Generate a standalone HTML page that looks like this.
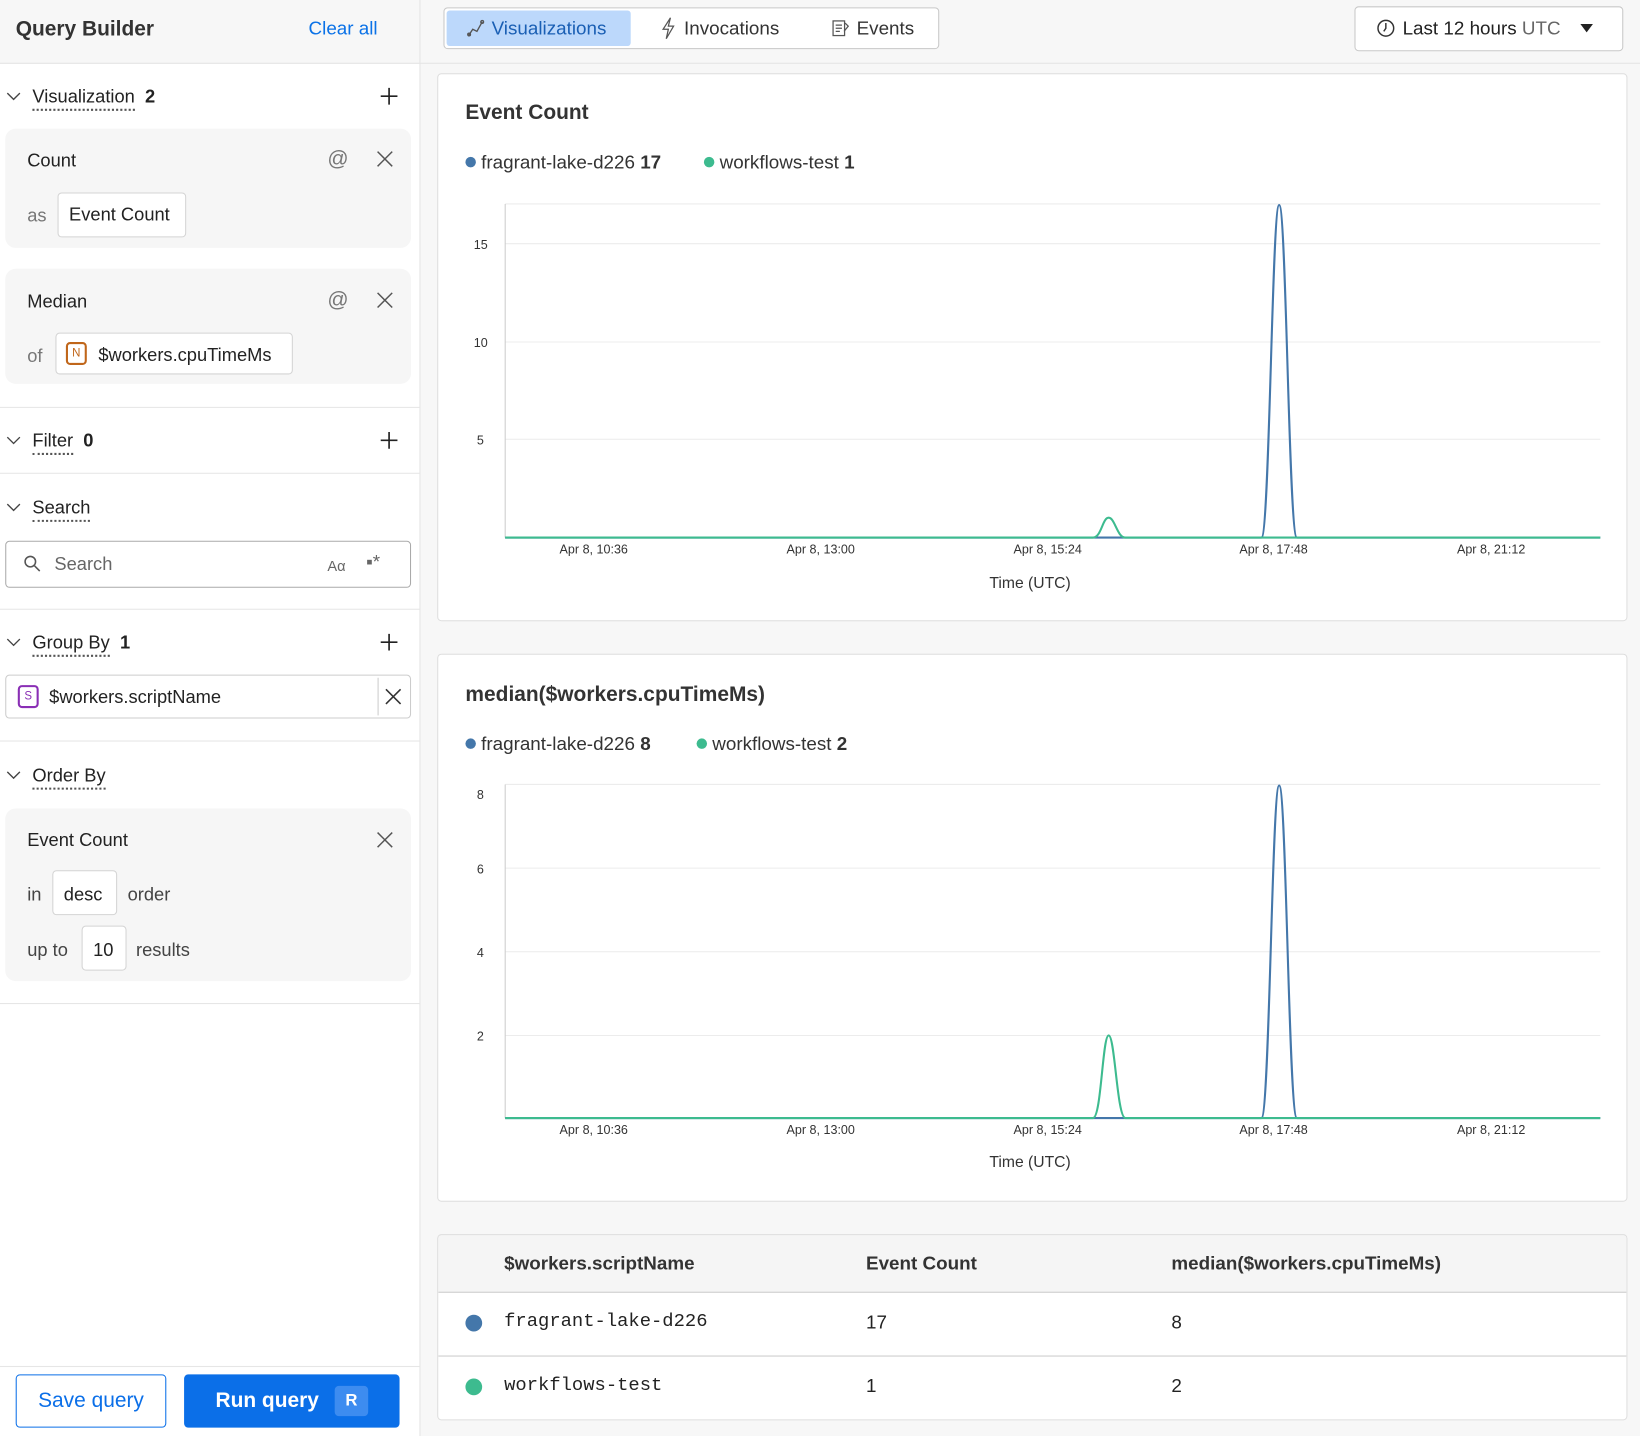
<!DOCTYPE html>
<html><head><meta charset="utf-8"><style>
*{box-sizing:border-box;margin:0;padding:0}
html,body{width:1640px;height:1436px;overflow:hidden;background:#f7f7f7}
#w{position:absolute;left:0;top:0;width:1568px;height:1373px;transform:scale(1.04592);transform-origin:0 0;font-family:"Liberation Sans",sans-serif;color:#222;font-size:17.5px;background:#f7f7f7}
.a{position:absolute}
.side{left:0;top:0;width:402px;height:1373px;background:#fff;border-right:1px solid #e4e4e4}
.hdr{left:0;top:0;width:1568px;height:61px;background:#f7f7f7;border-bottom:1px solid #e4e4e4}
.hl{border-top:1px solid #e6e6e6;left:0;width:402px}
.dot{border-bottom:2px dotted #555;padding-bottom:2px}
.box{background:#f6f6f6;border-radius:10px;left:5px;width:388px}
.inp{background:#fff;border:1px solid #d4d4d4;border-radius:4px}
.g{color:#777}
.card{background:#fff;border:1px solid #dedede;border-radius:4px;left:418px;width:1138px}
.ttl{font-size:20px;font-weight:bold;color:#333}
.lg{font-size:18px;color:#333}
.lg i{display:inline-block;width:10px;height:10px;border-radius:5px;margin-right:5px;vertical-align:1px}
svg text{font-family:"Liberation Sans",sans-serif}
</style></head><body><div id="w">
<div class="a hdr"></div>
<div class="a side"></div>
<div class="a" style="left:0;top:0;width:402px;height:61px;background:#f7f7f7;border-bottom:1px solid #e4e4e4;border-right:1px solid #e4e4e4"></div>
<div class="a" style="left:15px;top:17px;font-size:20px;font-weight:bold;color:#333">Query Builder</div>
<div class="a" style="left:295px;top:17px;font-size:18px;color:#0b72e7">Clear all</div>

<div class="a" style="left:424px;top:7px;width:474px;height:40px;border:1px solid #c8c8c8;border-radius:4px;background:#fff"></div>
<div class="a" style="left:427px;top:10px;width:176px;height:34px;background:#bcd8fb;border-radius:3px"></div>
<svg class="a" style="left:446px;top:18px" width="18" height="18" viewBox="0 0 18 18" fill="none" stroke="#555" stroke-width="1.3"><path d="M2 16 L6 10 L10 12 L15 3"/><circle cx="2.5" cy="15" r="1.3"/><circle cx="15" cy="3" r="1.3"/></svg>
<div class="a" style="left:470px;top:17px;font-size:18px;color:#1a5fb4">Visualizations</div>
<svg class="a" style="left:631px;top:16px" width="16" height="22" viewBox="0 0 16 22" fill="none" stroke="#555" stroke-width="1.2"><path d="M10 1 L3 12 H8 L6 21 L13 9 H8 Z"/></svg>
<div class="a" style="left:654px;top:17px;font-size:18px;color:#333">Invocations</div>
<svg class="a" style="left:795px;top:18px" width="18" height="18" viewBox="0 0 18 18" fill="none" stroke="#555" stroke-width="1.2"><rect x="1.5" y="2" width="11" height="14"/><path d="M4 6h6M4 9h6M4 12h4M13 4l3 3-4 5"/></svg>
<div class="a" style="left:819px;top:17px;font-size:18px;color:#333">Events</div>

<div class="a" style="left:1295px;top:6px;width:257px;height:43px;border:1px solid #c8c8c8;border-radius:4px;background:#fff"></div>
<svg class="a" style="left:1316px;top:18px" width="18" height="18" viewBox="0 0 18 18" fill="none" stroke="#333" stroke-width="1.4"><circle cx="9" cy="9" r="7.5"/><path d="M9 4v5l-2 3"/></svg>
<div class="a" style="left:1341px;top:17px;font-size:18px;color:#222">Last 12 hours <span style="color:#666">UTC</span></div>
<svg class="a" style="left:1510px;top:22px" width="14" height="10"><path d="M1 1h12L7 9z" fill="#222"/></svg>

<!-- sidebar -->
<svg class="a" style="left:6px;top:87px" width="14" height="10"><path d="M1 2l6 6 6-6" fill="none" stroke="#444" stroke-width="1.3"/></svg>
<div class="a" style="left:31px;top:82px"><span class="dot">Visualization</span>&nbsp; <b>2</b></div>
<svg class="a" style="left:363px;top:83px" width="18" height="18" stroke="#222" stroke-width="1.6"><path d="M9 1v16M1 9h16"/></svg>
<div class="a box" style="top:123px;height:114px"></div>
<div class="a" style="left:26px;top:143px">Count</div>
<div class="a" style="left:313px;top:141px;font-size:20px;color:#777">@</div>
<svg class="a" style="left:360px;top:144px" width="16" height="16" stroke="#555" stroke-width="1.4"><path d="M1 1l14 14M15 1L1 15"/></svg>
<div class="a g" style="left:26px;top:196px">as</div>
<div class="a inp" style="left:55px;top:184px;width:123px;height:43px"></div>
<div class="a" style="left:66px;top:195px">Event Count</div>
<div class="a box" style="top:257px;height:110px"></div>
<div class="a" style="left:26px;top:278px">Median</div>
<div class="a" style="left:313px;top:276px;font-size:20px;color:#777">@</div>
<svg class="a" style="left:360px;top:279px" width="16" height="16" stroke="#555" stroke-width="1.4"><path d="M1 1l14 14M15 1L1 15"/></svg>
<div class="a g" style="left:26px;top:330px">of</div>
<div class="a inp" style="left:53px;top:318px;width:227px;height:40px"></div>
<div class="a" style="left:63px;top:327px;width:20px;height:22px;border:2px solid #c0661a;border-radius:4px;font-size:11px;color:#c0661a;text-align:center;line-height:18px">N</div>
<div class="a" style="left:94px;top:329px">$workers.cpuTimeMs</div>

<div class="a hl" style="top:389px"></div>
<svg class="a" style="left:6px;top:416px" width="14" height="10"><path d="M1 2l6 6 6-6" fill="none" stroke="#444" stroke-width="1.3"/></svg>
<div class="a" style="left:31px;top:411px"><span class="dot">Filter</span>&nbsp; <b>0</b></div>
<svg class="a" style="left:363px;top:412px" width="18" height="18" stroke="#222" stroke-width="1.6"><path d="M9 1v16M1 9h16"/></svg>
<div class="a hl" style="top:452px"></div>
<svg class="a" style="left:6px;top:480px" width="14" height="10"><path d="M1 2l6 6 6-6" fill="none" stroke="#444" stroke-width="1.3"/></svg>
<div class="a" style="left:31px;top:475px"><span class="dot">Search</span></div>
<div class="a" style="left:5px;top:517px;width:388px;height:45px;border:1px solid #aaa;border-radius:4px"></div>
<svg class="a" style="left:22px;top:530px" width="18" height="18" fill="none" stroke="#555" stroke-width="1.5"><circle cx="7" cy="7" r="5"/><path d="M11 11l5 5"/></svg>
<div class="a g" style="left:52px;top:529px;color:#666">Search</div>
<div class="a" style="left:313px;top:533px;font-size:14px;color:#666">Aα</div>
<div class="a" style="left:350px;top:527px;font-size:18px;color:#666">▪*</div>
<div class="a hl" style="top:582px"></div>
<svg class="a" style="left:6px;top:609px" width="14" height="10"><path d="M1 2l6 6 6-6" fill="none" stroke="#444" stroke-width="1.3"/></svg>
<div class="a" style="left:31px;top:604px"><span class="dot">Group By</span>&nbsp; <b>1</b></div>
<svg class="a" style="left:363px;top:605px" width="18" height="18" stroke="#222" stroke-width="1.6"><path d="M9 1v16M1 9h16"/></svg>
<div class="a" style="left:5px;top:645px;width:388px;height:42px;border:1px solid #ccc;border-radius:4px"></div>
<div class="a" style="left:361px;top:648px;width:1px;height:36px;background:#ccc"></div>
<div class="a" style="left:17px;top:655px;width:20px;height:22px;border:2px solid #8a2fb5;border-radius:4px;font-size:11px;color:#8a2fb5;text-align:center;line-height:18px">S</div>
<div class="a" style="left:47px;top:656px">$workers.scriptName</div>
<svg class="a" style="left:368px;top:658px" width="16" height="16" stroke="#333" stroke-width="1.5"><path d="M1 1l14 14M15 1L1 15"/></svg>
<div class="a hl" style="top:708px"></div>
<svg class="a" style="left:6px;top:736px" width="14" height="10"><path d="M1 2l6 6 6-6" fill="none" stroke="#444" stroke-width="1.3"/></svg>
<div class="a" style="left:31px;top:731px"><span class="dot">Order By</span></div>
<div class="a box" style="top:773px;height:165px"></div>
<div class="a" style="left:26px;top:793px">Event Count</div>
<svg class="a" style="left:360px;top:795px" width="16" height="16" stroke="#555" stroke-width="1.4"><path d="M1 1l14 14M15 1L1 15"/></svg>
<div class="a" style="left:26px;top:845px;color:#444">in</div>
<div class="a inp" style="left:50px;top:832px;width:62px;height:43px"></div>
<div class="a" style="left:61px;top:845px">desc</div>
<div class="a" style="left:122px;top:845px;color:#444">order</div>
<div class="a" style="left:26px;top:898px;color:#444">up to</div>
<div class="a inp" style="left:78px;top:885px;width:43px;height:43px"></div>
<div class="a" style="left:89px;top:898px">10</div>
<div class="a" style="left:130px;top:898px;color:#444">results</div>
<div class="a hl" style="top:959px"></div>
<div class="a hl" style="top:1306px"></div>
<div class="a" style="left:15px;top:1314px;width:144px;height:51px;border:1px solid #0b6fe8;border-radius:4px;color:#0b6fe8;font-size:20px;text-align:center;line-height:49px">Save query</div>
<div class="a" style="left:176px;top:1314px;width:206px;height:51px;background:#0b6fe8;border-radius:4px;color:#fff;font-size:20px;font-weight:bold;line-height:51px;padding-left:30px">Run query</div>
<div class="a" style="left:320px;top:1325px;width:32px;height:29px;background:#3d8cf0;border-radius:4px;color:#fff;font-size:16px;text-align:center;line-height:29px;font-weight:bold">R</div>

<!-- card 1 -->
<div class="a card" style="top:70px;height:524px"></div>
<div class="a ttl" style="left:445px;top:97px">Event Count</div>
<div class="a lg" style="left:445px;top:145px"><i style="background:#4477aa"></i>fragrant-lake-d226 <b>17</b></div>
<div class="a lg" style="left:673px;top:145px"><i style="background:#3dbb8f"></i>workflows-test <b>1</b></div>
<svg class="a" style="left:418px;top:180px" width="1138" height="400">
<g stroke="#ececec"><line x1="65" x2="1112" y1="15" y2="15"/><line x1="65" x2="1112" y1="53" y2="53"/><line x1="65" x2="1112" y1="147" y2="147"/><line x1="65" x2="1112" y1="240" y2="240"/></g>
<line x1="65" x2="65" y1="15" y2="334" stroke="#ccc"/>
<g font-size="12" fill="#333"><text x="35" y="58">15</text><text x="35" y="152">10</text><text x="38" y="245">5</text>
<text x="117" y="349">Apr 8, 10:36</text><text x="334" y="349">Apr 8, 13:00</text><text x="551" y="349">Apr 8, 15:24</text><text x="767" y="349">Apr 8, 17:48</text><text x="975" y="349">Apr 8, 21:12</text></g>
<text x="528" y="382" font-size="15" fill="#333">Time (UTC)</text>
<path d="M65 334 H788 C796 334 798 16 805 16 C812 16 814 334 822 334 H1112" fill="none" stroke="#4477aa" stroke-width="2"/>
<path d="M65 334 H627 C635 334 636 315 642 315 C648 315 650 334 658 334 H1112" fill="none" stroke="#3dbb8f" stroke-width="2"/>
</svg>
<!-- card 2 -->
<div class="a card" style="top:625px;height:524px"></div>
<div class="a ttl" style="left:445px;top:653px">median($workers.cpuTimeMs)</div>
<div class="a lg" style="left:445px;top:701px"><i style="background:#4477aa"></i>fragrant-lake-d226 <b>8</b></div>
<div class="a lg" style="left:666px;top:701px"><i style="background:#3dbb8f"></i>workflows-test <b>2</b></div>
<svg class="a" style="left:418px;top:735px" width="1138" height="400">
<g stroke="#ececec"><line x1="65" x2="1112" y1="15" y2="15"/><line x1="65" x2="1112" y1="95" y2="95"/><line x1="65" x2="1112" y1="175" y2="175"/><line x1="65" x2="1112" y1="255" y2="255"/></g>
<line x1="65" x2="65" y1="15" y2="334" stroke="#ccc"/>
<g font-size="12" fill="#333"><text x="38" y="29">8</text><text x="38" y="100">6</text><text x="38" y="180">4</text><text x="38" y="260">2</text>
<text x="117" y="349">Apr 8, 10:36</text><text x="334" y="349">Apr 8, 13:00</text><text x="551" y="349">Apr 8, 15:24</text><text x="767" y="349">Apr 8, 17:48</text><text x="975" y="349">Apr 8, 21:12</text></g>
<text x="528" y="381" font-size="15" fill="#333">Time (UTC)</text>
<path d="M65 334 H788 C796 334 798 16 805 16 C812 16 814 334 822 334 H1112" fill="none" stroke="#4477aa" stroke-width="2"/>
<path d="M65 334 H627 C635 334 636 255 642 255 C648 255 650 334 658 334 H1112" fill="none" stroke="#3dbb8f" stroke-width="2"/>
</svg>
<!-- table -->
<div class="a card" style="top:1180px;height:178px;overflow:hidden">
<div style="height:55px;background:#f5f5f5;border-bottom:1px solid #ccc"></div>
<div style="height:61px;border-bottom:1px solid #ccc"></div>
</div>
<div class="a" style="left:482px;top:1198px;font-size:18px;font-weight:bold;color:#333">$workers.scriptName</div>
<div class="a" style="left:828px;top:1198px;font-size:18px;font-weight:bold;color:#333">Event Count</div>
<div class="a" style="left:1120px;top:1198px;font-size:18px;font-weight:bold;color:#333">median($workers.cpuTimeMs)</div>
<div class="a" style="left:445px;top:1257px;width:16px;height:16px;border-radius:8px;background:#4477aa"></div>
<div class="a" style="left:482px;top:1254px;font-family:'Liberation Mono',monospace;font-size:18px">fragrant-lake-d226</div>
<div class="a" style="left:828px;top:1254px;font-size:18px">17</div>
<div class="a" style="left:1120px;top:1254px;font-size:18px">8</div>
<div class="a" style="left:445px;top:1318px;width:16px;height:16px;border-radius:8px;background:#3dbb8f"></div>
<div class="a" style="left:482px;top:1315px;font-family:'Liberation Mono',monospace;font-size:18px">workflows-test</div>
<div class="a" style="left:828px;top:1315px;font-size:18px">1</div>
<div class="a" style="left:1120px;top:1315px;font-size:18px">2</div>
</div></body></html>
